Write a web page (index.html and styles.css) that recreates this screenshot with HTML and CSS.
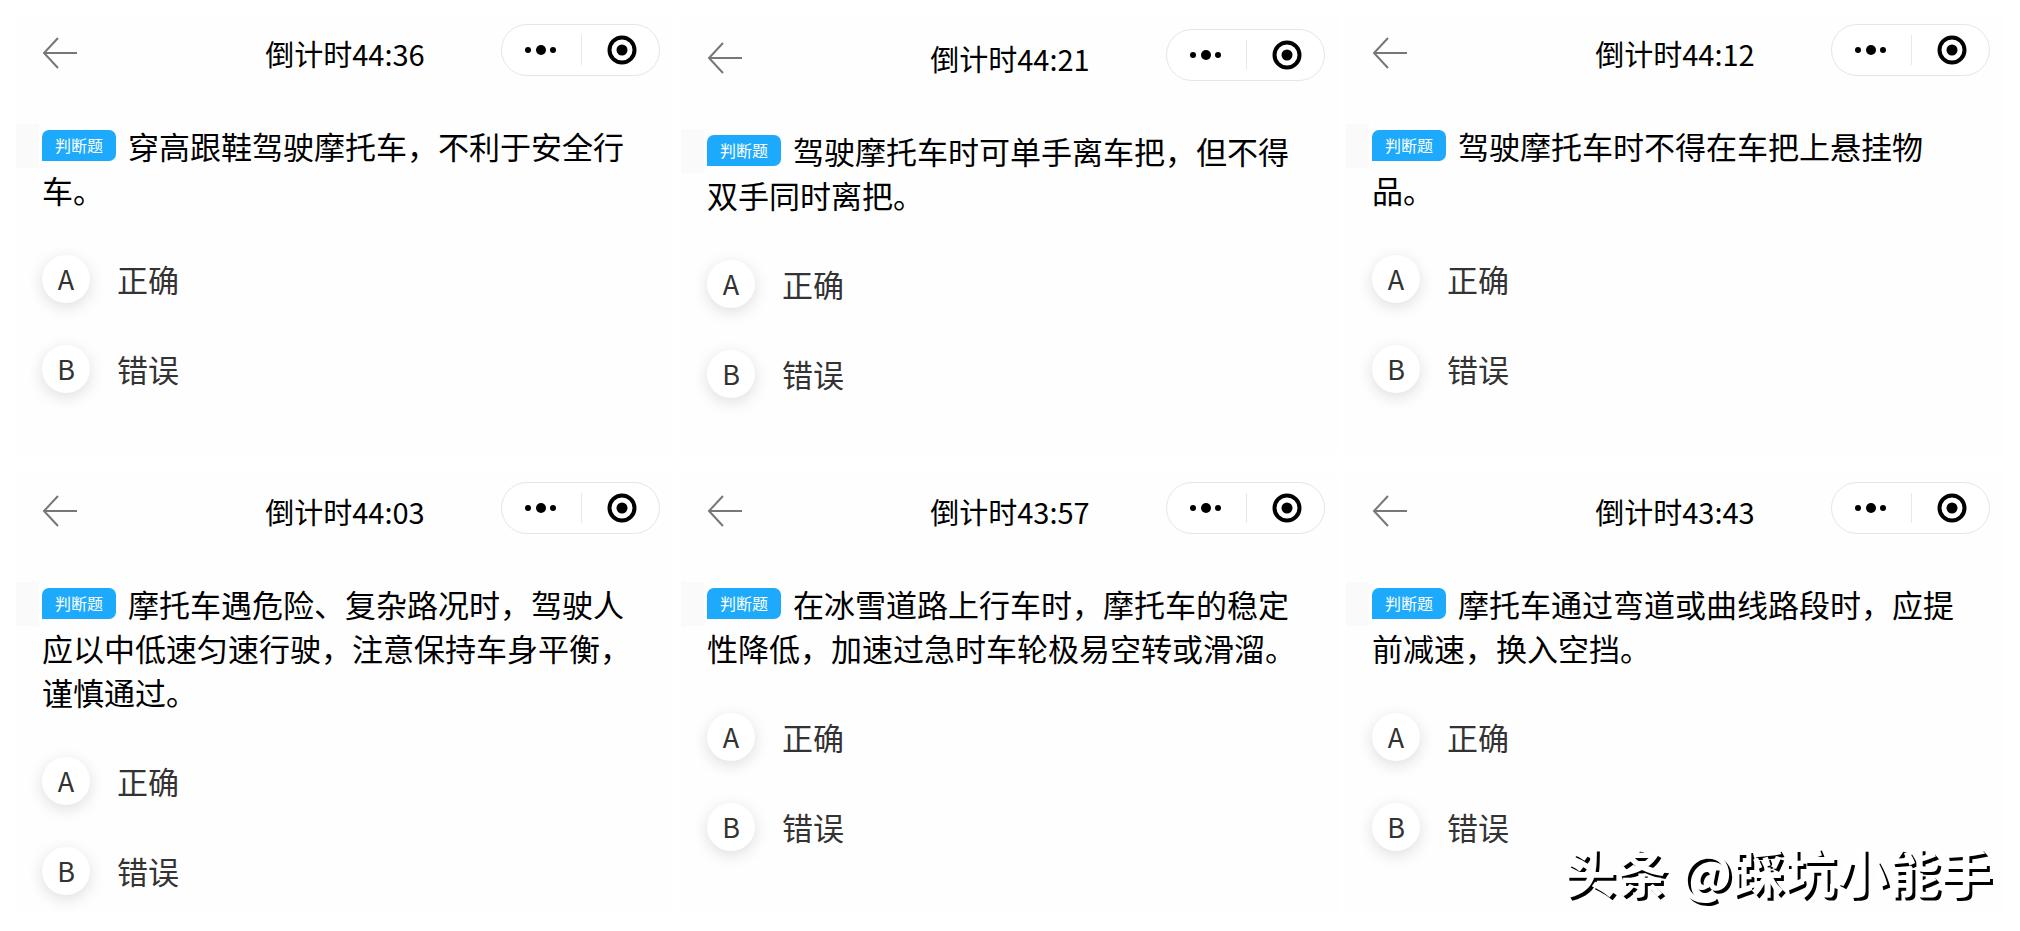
FILE: index.html
```html
<!DOCTYPE html>
<html lang="zh-CN">
<head>
  <meta charset="UTF-8" />
  <title>摩托车判断题</title>
  <link rel="stylesheet" href="styles.css">
</head>
<body>
  <!-- shared icons -->
  <svg class="icon-defs" aria-hidden="true">
    <symbol id="icon-back" viewBox="0 0 36 44">
      <path d="M17 6 L3 21 L17 36 M3 21 H36" fill="none" stroke="#777" stroke-width="2" />
    </symbol>
    <symbol id="icon-more" viewBox="0 0 78 50">
      <circle cx="26" cy="25" r="3" />
      <circle cx="39" cy="25" r="5" />
      <circle cx="51" cy="25" r="3" />
    </symbol>
    <symbol id="icon-close" viewBox="0 0 78 50">
      <circle cx="41" cy="25" r="12.5" fill="none" stroke="#000" stroke-width="4" />
      <circle cx="41" cy="25" r="5.5" />
    </symbol>
  </svg>

  <main class="board">
    <section class="card">
      <header class="card-header">
        <button class="back-button" aria-label="返回"><svg><use href="#icon-back" /></svg></button>
        <h2 class="timer">倒计时44:36</h2>
        <div class="capsule">
          <button aria-label="更多"><svg><use href="#icon-more" /></svg></button>
          <button aria-label="关闭"><svg><use href="#icon-close" /></svg></button>
        </div>
      </header>
      <p class="question"><span class="tag">判断题</span>穿高跟鞋驾驶摩托车，不利于安全行车。</p>
      <div class="options">
        <button class="option"><span class="letter">A</span>正确</button>
        <button class="option"><span class="letter">B</span>错误</button>
      </div>
    </section>

    <section class="card card-low">
      <header class="card-header">
        <button class="back-button" aria-label="返回"><svg><use href="#icon-back" /></svg></button>
        <h2 class="timer">倒计时44:21</h2>
        <div class="capsule">
          <button aria-label="更多"><svg><use href="#icon-more" /></svg></button>
          <button aria-label="关闭"><svg><use href="#icon-close" /></svg></button>
        </div>
      </header>
      <p class="question"><span class="tag">判断题</span>驾驶摩托车时可单手离车把，但不得双手同时离把。</p>
      <div class="options">
        <button class="option"><span class="letter">A</span>正确</button>
        <button class="option"><span class="letter">B</span>错误</button>
      </div>
    </section>

    <section class="card">
      <header class="card-header">
        <button class="back-button" aria-label="返回"><svg><use href="#icon-back" /></svg></button>
        <h2 class="timer">倒计时44:12</h2>
        <div class="capsule">
          <button aria-label="更多"><svg><use href="#icon-more" /></svg></button>
          <button aria-label="关闭"><svg><use href="#icon-close" /></svg></button>
        </div>
      </header>
      <p class="question"><span class="tag">判断题</span>驾驶摩托车时不得在车把上悬挂物品。</p>
      <div class="options">
        <button class="option"><span class="letter">A</span>正确</button>
        <button class="option"><span class="letter">B</span>错误</button>
      </div>
    </section>

    <section class="card">
      <header class="card-header">
        <button class="back-button" aria-label="返回"><svg><use href="#icon-back" /></svg></button>
        <h2 class="timer">倒计时44:03</h2>
        <div class="capsule">
          <button aria-label="更多"><svg><use href="#icon-more" /></svg></button>
          <button aria-label="关闭"><svg><use href="#icon-close" /></svg></button>
        </div>
      </header>
      <p class="question"><span class="tag">判断题</span>摩托车遇危险、复杂路况时，驾驶人应以中低速匀速行驶，注意保持车身平衡，谨慎通过。</p>
      <div class="options">
        <button class="option"><span class="letter">A</span>正确</button>
        <button class="option"><span class="letter">B</span>错误</button>
      </div>
    </section>

    <section class="card">
      <header class="card-header">
        <button class="back-button" aria-label="返回"><svg><use href="#icon-back" /></svg></button>
        <h2 class="timer">倒计时43:57</h2>
        <div class="capsule">
          <button aria-label="更多"><svg><use href="#icon-more" /></svg></button>
          <button aria-label="关闭"><svg><use href="#icon-close" /></svg></button>
        </div>
      </header>
      <p class="question"><span class="tag">判断题</span>在冰雪道路上行车时，摩托车的稳定性降低，加速过急时车轮极易空转或滑溜。</p>
      <div class="options">
        <button class="option"><span class="letter">A</span>正确</button>
        <button class="option"><span class="letter">B</span>错误</button>
      </div>
    </section>

    <section class="card">
      <header class="card-header">
        <button class="back-button" aria-label="返回"><svg><use href="#icon-back" /></svg></button>
        <h2 class="timer">倒计时43:43</h2>
        <div class="capsule">
          <button aria-label="更多"><svg><use href="#icon-more" /></svg></button>
          <button aria-label="关闭"><svg><use href="#icon-close" /></svg></button>
        </div>
      </header>
      <p class="question"><span class="tag">判断题</span>摩托车通过弯道或曲线路段时，应提前减速，换入空挡。</p>
      <div class="options">
        <button class="option"><span class="letter">A</span>正确</button>
        <button class="option"><span class="letter">B</span>错误</button>
      </div>
    </section>
  </main>

  <div class="watermark">头条 @踩坑小能手</div>
</body>
</html>
```
FILE: styles.css
```css
* { box-sizing: border-box; }
body {
  margin: 0;
  font-family: "Noto Sans CJK SC", sans-serif;
  background: #fff;
  color: #000;
}
button {
  padding: 0;
  border: none;
  background: none;
  font-family: inherit;
  color: inherit;
  cursor: pointer;
}
.icon-defs { display: none; }

.board {
  display: grid;
  grid-template-columns: repeat(3, 1fr);
  gap: 18px 7px;
  padding: 15px 16px 12px;
}
.card {
  min-height: 440px;
  padding-top: 9px;
  background: #fefefe;
}
.card-low { padding-top: 14px; }

/* Top bar */
.card-header {
  display: grid;
  grid-template-columns: 1fr auto 1fr;
  align-items: end;
  height: 52px;
  padding: 0 14px;
}
.back-button {
  justify-self: start;
  width: 36px;
  height: 44px;
  margin-left: 11px;
}
.back-button svg {
  display: block;
  width: 36px;
  height: 44px;
}
.timer {
  margin: 0;
  font-size: 29px;
  font-weight: 400;
  line-height: 46px;
}
.capsule {
  justify-self: end;
  display: flex;
  width: 159px;
  height: 52px;
  border: 1px solid #e6e6e6;
  border-radius: 26px;
  background: #fff;
}
.capsule button { flex: 1; }
.capsule button + button {
  background: linear-gradient(#e8e8e8, #e8e8e8) no-repeat left center / 1px 30px;
}
.capsule svg {
  display: block;
  width: 78px;
  height: 50px;
}

/* Question text, with the pale strip left of the tag */
.question {
  margin: 48px 0 0;
  padding: 0 30px 0 26px;
  background: linear-gradient(#fafafa, #fafafa) no-repeat left top / 23px 44px;
  font-size: 31px;
  line-height: 44px;
}
.tag {
  display: inline-block;
  height: 31px;
  margin-right: 12px;
  padding: 0 13px;
  border-radius: 7px 7px 7px 0;
  background: #1eaafc;
  color: #fff;
  font-size: 16px;
  line-height: 31px;
  vertical-align: 7px;
}

/* Answers */
.options {
  display: flex;
  flex-direction: column;
  align-items: flex-start;
  gap: 42px;
  padding: 43px 26px 18px;
}
.option {
  display: flex;
  align-items: center;
  gap: 27px;
  font-size: 31px;
  line-height: 48px;
  color: #333;
}
.letter {
  width: 48px;
  height: 48px;
  border-radius: 50%;
  background: #fff;
  box-shadow: 0 4px 16px rgba(0, 0, 0, 0.13);
  font-size: 27px;
}

.watermark {
  position: fixed;
  right: 28px;
  bottom: 22px;
  color: #fff;
  font-size: 52px;
  font-weight: 700;
  line-height: 76px;
  text-shadow: 3px 3px 0 #000;
}
```
